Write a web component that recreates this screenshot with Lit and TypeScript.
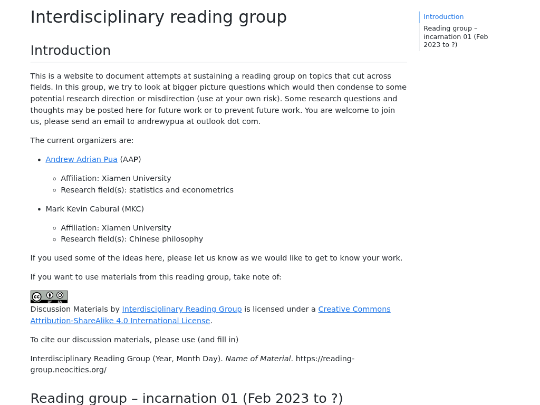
import {LitElement, html, css} from "lit";
import {customElement, property} from "lit/decorators.js";

interface Organizer {
    name: string;
    initials: string;
    link: boolean;
    field: string;
}

const organizers: Organizer[] = [
    {name: "Andrew Adrian Pua", initials: "AAP", link: true, field: "statistics and econometrics"},
    {name: "Mark Kevin Cabural", initials: "MKC", link: false, field: "Chinese philosophy"},
];

@customElement("license-badge")
class LicenseBadge extends LitElement {
    static styles = css`
        :host {
            display: block;
            width: 88px;
            height: 31px;
        }

        svg {
            display: block;
        }

        text {
            font: bold 7px "Liberation Sans", sans-serif;
            fill: #fff;
        }
    `;

    override render() {
        return html`
            <svg width="88" height="31" viewBox="0 0 88 31">
                <rect width="88" height="31" fill="#000"/>
                <rect x="1" y="1" width="86" height="22" fill="#aab2ab"/>
                <circle cx="15" cy="15.5" r="13" fill="#aab2ab"/>
                <circle cx="15" cy="15.5" r="10.3" fill="#fff" stroke="#000" stroke-width="2.2"/>
                <g fill="none" stroke="#000" stroke-width="1.9">
                    <path d="M14 13.8a2.7 2.7 0 1 0 0 3.6M21 13.8a2.7 2.7 0 1 0 0 3.6"/>
                </g>
                <circle cx="46" cy="11.5" r="7.6" fill="#fff" stroke="#000" stroke-width="1.5"/>
                <circle cx="46" cy="7.2" r="1.3"/>
                <path d="M43.8 9.2h4.4v4.3h-1v4h-2.4v-4h-1z"/>
                <circle cx="70" cy="11.5" r="7.6" fill="#fff" stroke="#000" stroke-width="1.5"/>
                <path d="M66.8 10.2a3.6 3.6 0 1 1 0 2.8" fill="none" stroke="#000" stroke-width="1.8"/>
                <path d="M64.8 10.4h4.2l-2.1 2.4z"/>
                <text x="41" y="29.5">BY</text>
                <text x="65" y="29.5">SA</text>
            </svg>
        `;
    }
}

@customElement("page-toc")
class PageToc extends LitElement {
    @property({type: Array}) entries: string[] = [];

    static styles = css`
        ul {
            list-style: none;
            margin: 0;
            padding: 0;
            font-size: 15.75px;
            line-height: 18.9px;
        }

        li {
            padding: 4px 0 5px 9px;
            border-left: 2px solid #ebedef;
        }

        li:first-child {
            color: #1f76e8;
            border-left-color: #8dbdf2;
        }
    `;

    override render() {
        return html`<ul>${this.entries.map(entry => html`<li>${entry}</li>`)}</ul>`;
    }
}

@customElement("app-root")
class AppRoot extends LitElement {
    static styles = css`
        :host {
            display: block;
            width: 540px;
            height: 405px;
            overflow: hidden;
            background: #fff;
        }

        /* the page is laid out at 1280px and scaled down to the window in two steps */
        .stage {
            width: 1024px;
            height: 768px;
            overflow: hidden;
            transform: scale(0.52734375);
            transform-origin: 0 0;
            will-change: transform;
        }

        .page {
            box-sizing: border-box;
            display: flex;
            gap: 28px;
            width: 1280px;
            height: 960px;
            padding-left: 72px;
            overflow: hidden;
            transform: scale(0.8);
            transform-origin: 0 0;
            font: 18px/27px "DejaVu Sans", sans-serif;
            color: #24292e;
        }

        main {
            width: 893px;
            padding-top: 17px;
        }

        h1,
        h2 {
            margin: 0;
            font-weight: 400;
            line-height: 1.2;
        }

        h1 {
            font-size: 39.6px;
        }

        h2 {
            margin: 36px 0 18px;
            padding-bottom: 9px;
            border-bottom: 1px solid #e6e9ec;
            font-size: 31.5px;
        }

        p {
            margin: 0 0 18px;
        }

        ul {
            margin: 0 0 18px;
            padding-left: 36px;
        }

        li > ul {
            margin-top: 18px;
        }

        a {
            color: #1f76e8;
            text-decoration: underline;
        }

        .toc {
            width: 184px;
            padding-top: 27px;
        }
    `;

    private renderOrganizer({name, initials, link, field}: Organizer) {
        return html`
            <li>
                ${link ? html`<a>${name}</a>` : name} (${initials})
                <ul>
                    <li>Affiliation: Xiamen University</li>
                    <li>Research field(s): ${field}</li>
                </ul>
            </li>
        `;
    }

    override render() {
        return html`
            <div class="stage">
                <div class="page">
                    <main>
                        <h1>Interdisciplinary reading group</h1>
                        <h2>Introduction</h2>
                        <p>This is a website to document attempts at sustaining a reading group on topics that cut across fields. In this group, we try to look at bigger picture questions which would then condense to some potential research direction or misdirection (use at your own risk). Some research questions and thoughts may be posted here for future work or to prevent future work. You are welcome to join us, please send an email to andrewypua at outlook dot com.</p>
                        <p>The current organizers are:</p>
                        <ul>${organizers.map(organizer => this.renderOrganizer(organizer))}</ul>
                        <p>If you used some of the ideas here, please let us know as we would like to get to know your work.</p>
                        <p>If you want to use materials from this reading group, take note of:</p>
                        <p>
                            <license-badge></license-badge>
                            Discussion Materials by <a>Interdisciplinary Reading Group</a> is licensed under a <a>Creative Commons Attribution-ShareAlike 4.0 International License</a>.
                        </p>
                        <p>To cite our discussion materials, please use (and fill in)</p>
                        <p>Interdisciplinary Reading Group (Year, Month Day). <em>Name of Material</em>. https://reading-group.neocities.org/</p>
                        <h2>Reading group – incarnation 01 (Feb 2023 to ?)</h2>
                    </main>
                    <nav class="toc">
                        <page-toc .entries=${["Introduction", "Reading group – incarnation 01 (Feb 2023 to ?)"]}></page-toc>
                    </nav>
                </div>
            </div>
        `;
    }
}

declare global {
    interface HTMLElementTagNameMap {
        "license-badge": LicenseBadge;
        "page-toc": PageToc;
        "app-root": AppRoot;
    }
}

export default AppRoot;
